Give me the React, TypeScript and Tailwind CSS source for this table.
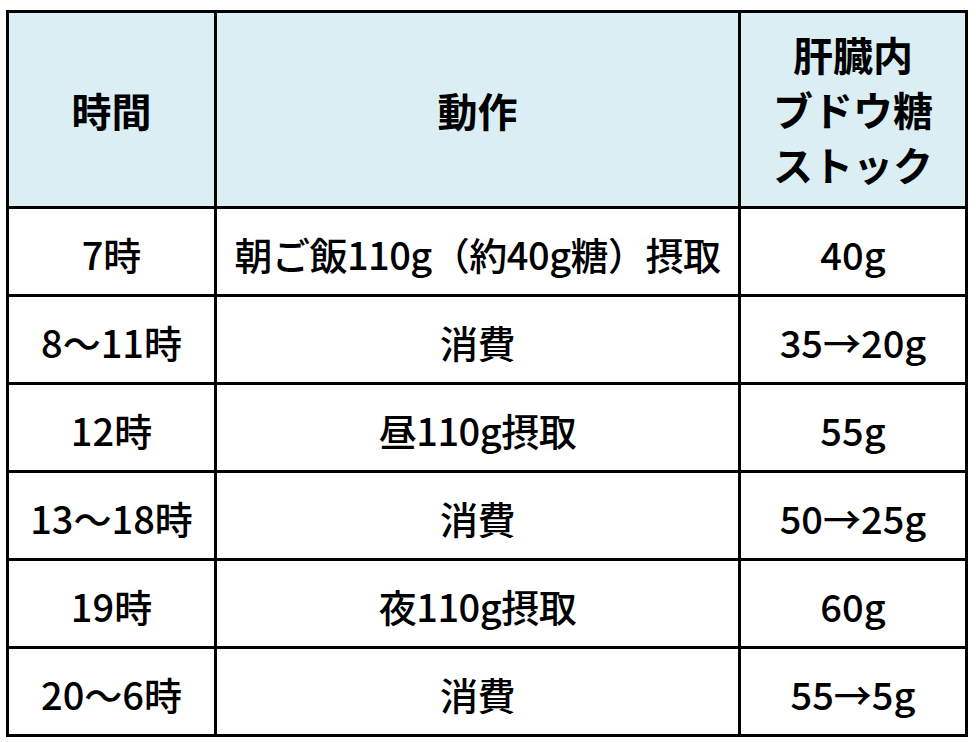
import { Fragment } from "react"

const rows = [
  { time: "7時", action: "朝ご飯110g（約40g糖）摂取", stock: "40g" },
  { time: "8〜11時", action: "消費", stock: "35→20g" },
  { time: "12時", action: "昼110g摂取", stock: "55g" },
  { time: "13〜18時", action: "消費", stock: "50→25g" },
  { time: "19時", action: "夜110g摂取", stock: "60g" },
  { time: "20〜6時", action: "消費", stock: "55→5g" },
]

const App = () => {
  return (
    <div className="w-[976px] h-[742px] bg-white pl-[6px] pt-[10px] font-['Noto_Sans_CJK_JP',sans-serif] text-black">
      <div className="grid w-fit grid-cols-[205px_521px_224px] grid-rows-[193px_repeat(6,85px)] gap-[3px] bg-black p-[3px]">
        <div className="flex items-center justify-center bg-[#daeef3] text-[40px] font-bold">時間</div>
        <div className="flex items-center justify-center bg-[#daeef3] text-[40px] font-bold">動作</div>
        <div className="flex flex-col items-center justify-center bg-[#daeef3] text-[40px] font-bold leading-[55px]">
          <span>肝臓内</span>
          <span>ブドウ糖</span>
          <span>ストック</span>
        </div>
        {rows.map((r) => (
          <Fragment key={r.time}>
            <div className="flex items-center justify-center bg-white text-[38px] font-medium pt-1">{r.time}</div>
            <div className="flex items-center justify-center bg-white text-[38px] font-medium pt-1 tracking-[-0.5px]">{r.action}</div>
            <div className="flex items-center justify-center bg-white text-[38px] font-medium pt-1">{r.stock}</div>
          </Fragment>
        ))}
      </div>
    </div>
  )
}

export default App
